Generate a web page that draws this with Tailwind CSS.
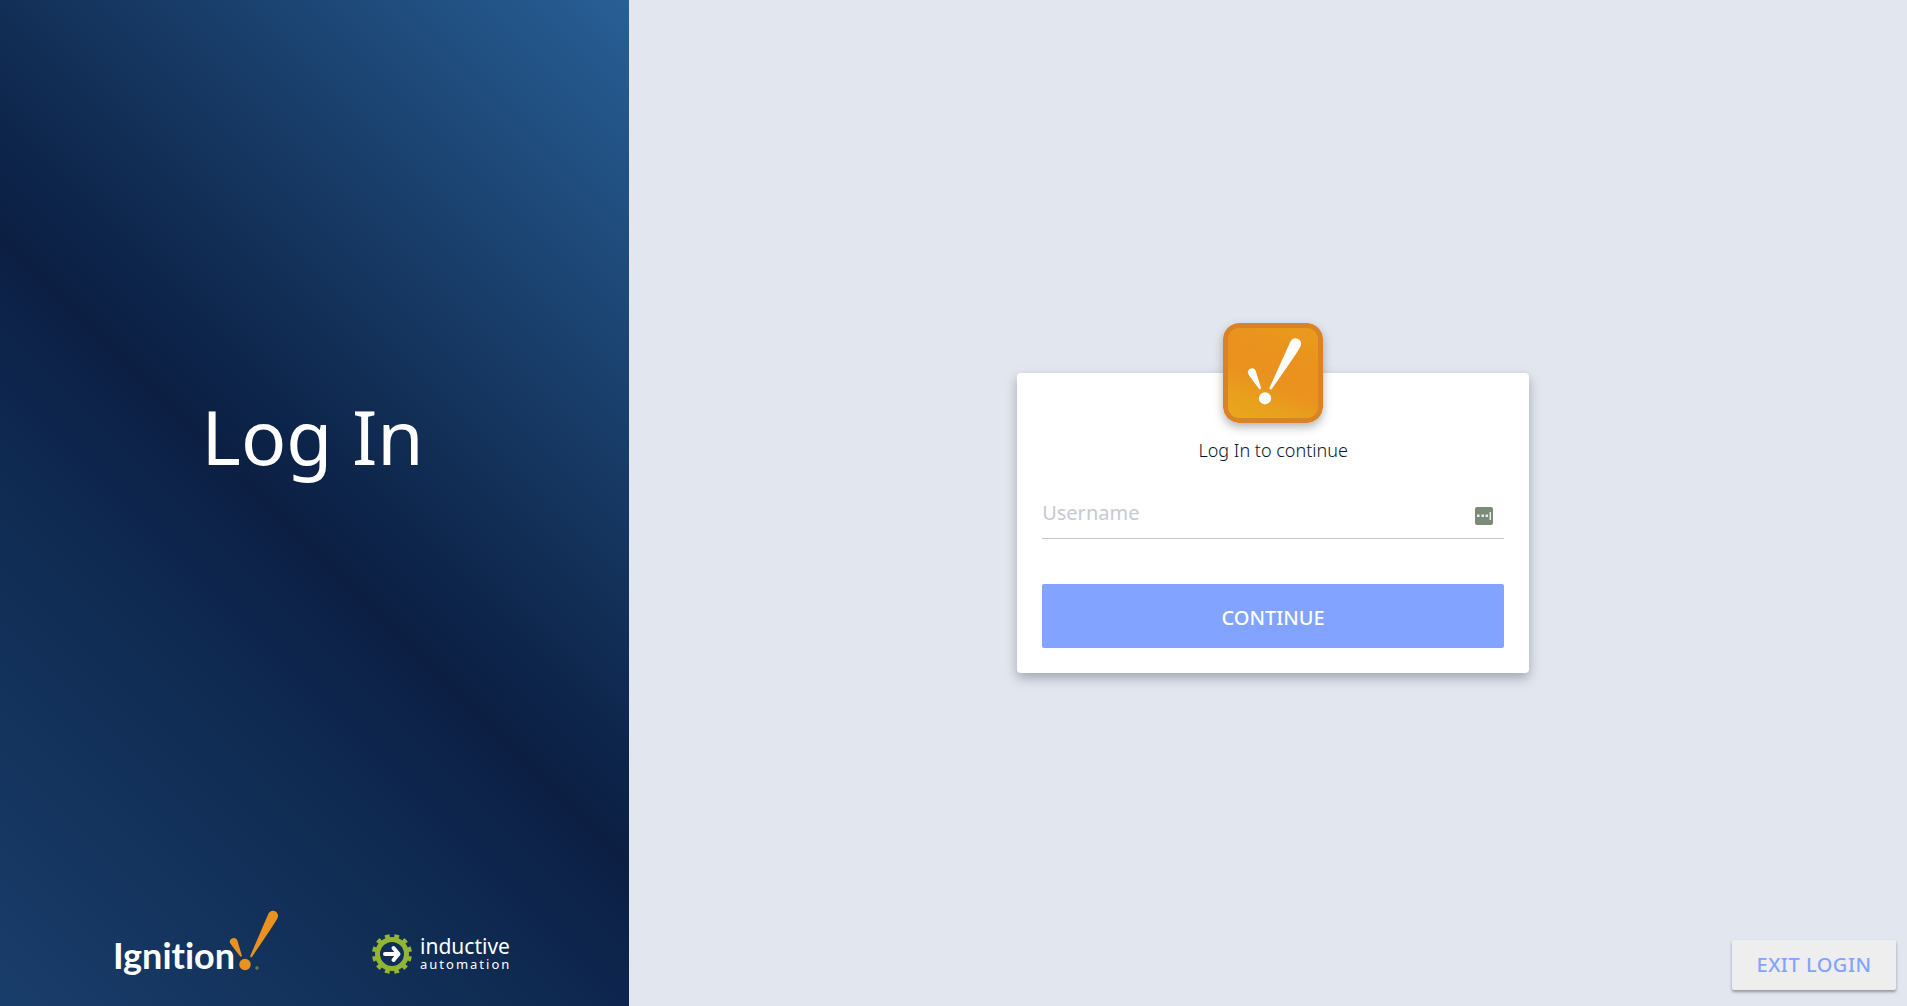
<!DOCTYPE html>
<html lang="en">
<head>
    <meta charset="UTF-8">
    <meta name="viewport" content="width=device-width, initial-scale=1.0">
    <title>Log In</title>
    <script src="https://cdn.jsdelivr.net/npm/@tailwindcss/browser@4"></script>
</head>
<body class="font-['Noto_Sans',sans-serif]">
    <div class="flex min-h-screen bg-[#e2e7ef]">
        <!-- Branding panel -->
        <aside class="w-[33%] shrink-0 flex flex-col bg-[linear-gradient(45deg,#193d6a_0%,#0f2b52_32%,#0d234a_42%,#0c1f43_47%,#0d244a_53%,#112d54_60%,#285f96_100%)]">
            <div class="flex-1 flex items-center justify-center pb-[38px] pr-1">
                <h1 class="text-[75px] leading-none text-white">Log In</h1>
            </div>
            <div class="flex items-center justify-between pl-[112px] pr-[118px] pb-2">
                <svg class="w-[168px] h-[88px] [font-variant-ligatures:none]" viewBox="0 0 168 88" role="img" aria-label="Ignition">
                    <text x="1" y="59" fill="#fff" font-family="Lato, sans-serif" font-weight="700" font-size="36">Ignition</text>
                    <g fill="#e9921f">
                        <path d="M156.500 3.500a5 5 0 0 1 9 4.500q-1 3-26 39.500l-1.500-1q17-39.500 18.500-43z"/>
                        <path d="M117.800 32.500a4 4 0 0 1 7.400-2.500l4.800 16-1.500.8q-9.500-12-10.700-14.300z"/>
                        <circle cx="133" cy="54.500" r="5.700"/>
                    </g>
                    <circle cx="145" cy="58" r="1.200" fill="none" stroke="#8fa03c"/>
                </svg>
                <div class="flex items-center gap-2 text-white">
                    <svg class="size-10" viewBox="0 0 40 40" aria-hidden="true">
                        <g fill="none" stroke="#93b536">
                            <circle cx="20" cy="20" r="14.500" stroke-width="5"/>
                            <circle cx="20" cy="20" r="18" stroke-width="4" pathLength="120" stroke-dasharray="5 5" stroke-dashoffset="-2.500"/>
                        </g>
                        <path d="M13 20h12M21.500 14l5 6-5 6" fill="none" stroke="#fff" stroke-width="4" stroke-linecap="round" stroke-linejoin="round"/>
                    </svg>
                    <div class="flex flex-col">
                        <span class="text-[21px] leading-5">inductive</span>
                        <span class="text-[13px] leading-4 tracking-[2px]">automation</span>
                    </div>
                </div>
            </div>
        </aside>

        <main class="flex-1 flex flex-col">
            <div class="flex-1 flex items-center justify-center pt-[105px] pl-[10px]">
                <form class="relative w-[512px] rounded bg-white px-[25px] pt-[63px] pb-[25px] shadow-[0_5px_12px_rgba(60,70,80,0.4)]">
                    <!-- App badge, sits half over the top edge of the card -->
                    <svg class="absolute left-1/2 top-0 -translate-x-1/2 -translate-y-1/2 size-[100px] rounded-[16px] shadow-[0_4px_10px_rgba(60,70,80,0.4)]" viewBox="0 0 100 100" aria-hidden="true">
                        <defs>
                            <linearGradient id="badge" x1="0.200" y1="1" x2="0.600" y2="0">
                                <stop offset="0" stop-color="#e8a61d"/>
                                <stop offset="0.200" stop-color="#e8a01d"/>
                                <stop offset="0.450" stop-color="#ea911e"/>
                                <stop offset="0.700" stop-color="#ea911e"/>
                                <stop offset="1" stop-color="#e9991d"/>
                            </linearGradient>
                        </defs>
                        <rect width="100" height="100" rx="16" fill="#d98226"/>
                        <rect x="5" y="5" width="90" height="90" rx="11" fill="url(#badge)"/>
                        <g fill="#fff">
                            <path d="M67.500 18.500a5.500 5.500 0 0 1 10.200 4.500q-1.500 4-29.500 43.800l-2-1.300q19-42 21.300-47z"/>
                            <path d="M25.200 51a4.100 4.100 0 0 1 7.400-3.500l5.600 18-1.600 1q-10-13-11.400-15.500z"/>
                            <circle cx="42" cy="75.300" r="6.100"/>
                        </g>
                    </svg>
                    <p class="text-center text-[18px] leading-7 font-light text-[#06182c]">Log In to continue</p>
                    <div class="relative mt-6">
                        <input type="text" id="username" name="username" aria-label="Username" placeholder="Username"
                            class="block w-full h-[51px] border-b border-[#c4c6cc] text-[20px] text-[#14304f] placeholder:text-[#c6cad1] focus:outline-none">
                        <svg class="absolute right-[11px] top-[19px] size-[18px]" viewBox="0 0 18 18" aria-hidden="true">
                            <rect width="18" height="18" rx="2" fill="#7c8b78"/>
                            <path d="M2 7.500h2.500v2.500H2zM6.500 7.500H9v2.500H6.500zM10.500 7.500H13v2.500h-2.500zM14.500 5H16v8h-1.500z" fill="#e8ecf4"/>
                        </svg>
                    </div>
                    <button type="submit" class="mt-[45px] block w-full h-16 rounded-xs bg-[#82a3ff] pt-1 text-[20px] font-medium text-white">CONTINUE</button>
                </form>
            </div>
            <div class="flex justify-end pr-[11px] pb-4">
                <button type="button" class="w-[164px] h-[50px] rounded-xs bg-[#eeeeee] text-[20px] font-medium tracking-wide text-[#82a3ff] shadow-[0_2px_3px_rgba(60,70,80,0.5)]">EXIT LOGIN</button>
            </div>
        </main>
    </div>
</body>
</html>
